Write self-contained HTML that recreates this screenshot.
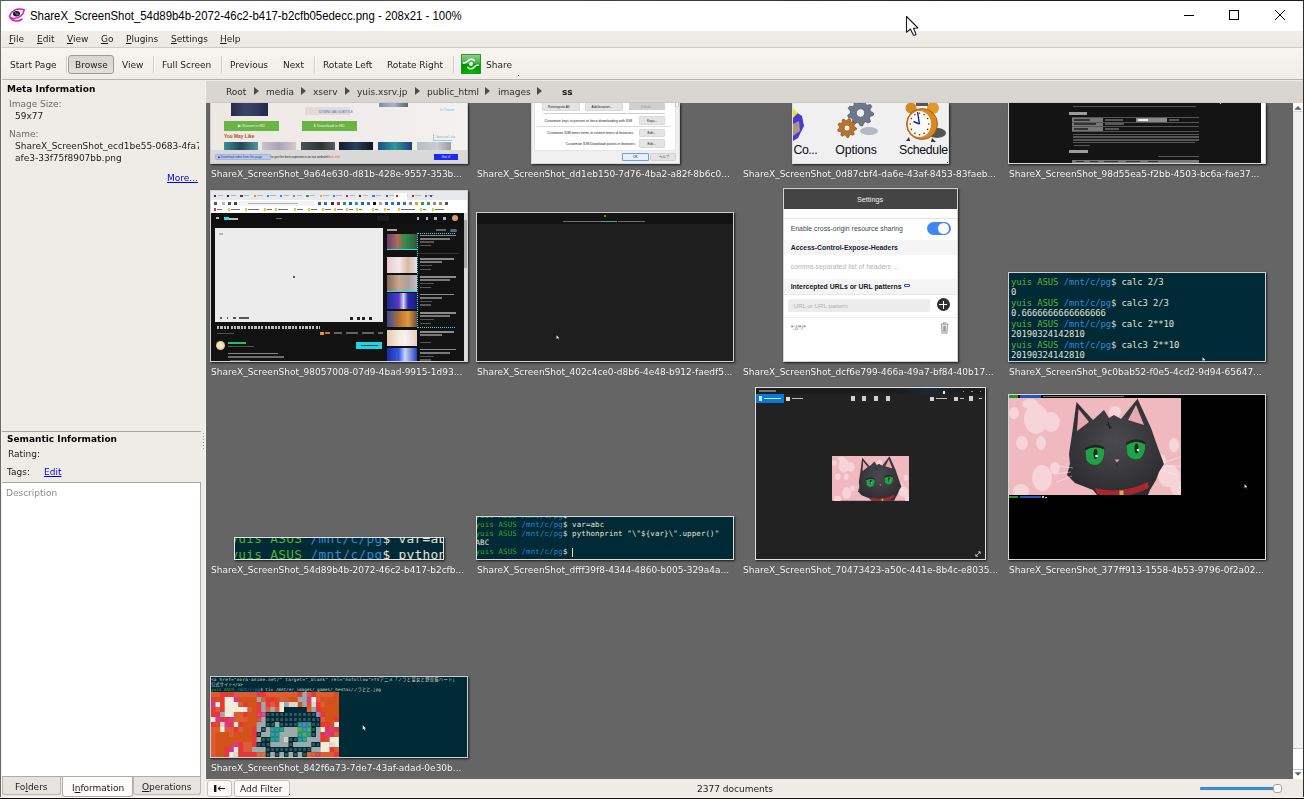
<!DOCTYPE html>
<html><head><meta charset="utf-8">
<title>Gwenview</title>
<style>
html,body{margin:0;padding:0;}
body>*{will-change:opacity;}
body{width:1304px;height:799px;position:relative;overflow:hidden;background:#efebe7;font-family:"DejaVu Sans","Liberation Sans",sans-serif;font-size:9px;color:#1c1c1c;}
.abs,.t,.th,.lbl,.sep,.tri{position:absolute;}
.t{white-space:nowrap;line-height:11px;height:11px;}
u{text-decoration:underline;text-decoration-thickness:1px;text-underline-offset:1px;}
#title{left:0;top:0;width:1304px;height:31px;background:#fff;}
#title .tt{left:30px;top:9px;font-family:"Liberation Sans",sans-serif;font-size:12.5px;line-height:15px;height:15px;color:#000;transform:scaleX(.912);transform-origin:0 0;}
#menubar{left:1px;top:31px;width:1302px;height:16px;background:linear-gradient(#f1eeea,#ece8e4);border-bottom:1px solid #d0ccc7;}
#toolbar{left:1px;top:48px;width:1302px;height:31px;background:linear-gradient(#f8f5f1,#f0ece8);border-bottom:1px solid #b7b3af;}
.sep{top:56px;width:1px;height:17px;background:#d0cdc9;box-shadow:1px 0 0 #fbfaf9;}
#left{left:1px;top:80px;width:204px;height:718px;background:#efebe7;}
#crumb{left:206px;top:81px;width:1097px;height:22px;background:#d9d6d2;}
#crumb .t{color:#2a2a2a;}
.tri{width:0;height:0;border-left:5.8px solid #4c4c4c;border-top:4.8px solid transparent;border-bottom:4.8px solid transparent;top:86.7px;}
#view{left:206px;top:103px;width:1087px;height:676px;background:#656565;overflow:hidden;}
#status{left:206px;top:779px;width:1097px;height:19px;background:#efebe7;}
.lbl{text-shadow:0 0 1px rgba(0,0,0,.55);color:#fff;font-size:9px;line-height:11px;white-space:nowrap;}
.th{overflow:hidden;box-sizing:border-box;border:1px solid #c9c9c9;}
.sh{position:absolute;box-shadow:1px 1px 2px rgba(0,0,0,.75);}
.g{color:#6e6b68;}
a.l{color:#0000ee;text-decoration:underline;text-underline-offset:1px;}
</style></head><body>
<!-- title bar -->
<div id="title" class="abs"><div class="t tt">ShareX_ScreenShot_54d89b4b-2072-46c2-b417-b2cfb05edecc.png - 208x21 - 100%</div>
<svg class="abs" style="left:8px;top:7px" width="18" height="16" viewBox="0 0 18 16"><path d="M1.5 9.5 C3 3.6 9 .7 16.2 2.8 C15.6 8 11 12 5 11.5 C3.5 11.3 2 10.6 1.5 9.5Z" fill="#f1ecfa" stroke="#d61fb0" stroke-width="1.5"/><path d="M2.2 11 C5 14.8 10 14.6 14 12.2" fill="none" stroke="#d61fb0" stroke-width="1.6" stroke-linecap="round"/><ellipse cx="8.5" cy="6.7" rx="3.5" ry="2.7" fill="#161616"/><circle cx="9.2" cy="7.3" r="1.3" fill="#2e8a2e"/><circle cx="7.6" cy="5.9" r=".8" fill="#5a6fd8"/></svg>
<svg class="abs" style="left:1180px;top:6px" width="110" height="18" viewBox="0 0 110 18"><path d="M4 9.5h10" stroke="#000" stroke-width="1"/><rect x="49.5" y="4.5" width="9" height="9" fill="none" stroke="#000" stroke-width="1"/><path d="M95 4l10 10M105 4l-10 10" stroke="#000" stroke-width="1"/></svg>
</div>
<!-- menubar -->
<div id="menubar" class="abs"></div>
<div class="t" style="left:9px;top:34px"><u>F</u>ile</div>
<div class="t" style="left:37px;top:34px"><u>E</u>dit</div>
<div class="t" style="left:67px;top:34px"><u>V</u>iew</div>
<div class="t" style="left:101px;top:34px"><u>G</u>o</div>
<div class="t" style="left:126px;top:34px"><u>P</u>lugins</div>
<div class="t" style="left:171px;top:34px"><u>S</u>ettings</div>
<div class="t" style="left:220px;top:34px"><u>H</u>elp</div>
<!-- toolbar -->
<div id="toolbar" class="abs"></div>
<div class="abs" style="left:68px;top:55px;width:46px;height:19px;box-sizing:border-box;border:1px solid #9e9b97;border-radius:3px;background:linear-gradient(#d9d6d2,#e2dfdb)"></div>
<div class="t" style="left:10px;top:60px">Start Page</div>
<div class="t" style="left:75px;top:60px">Browse</div>
<div class="t" style="left:122px;top:60px">View</div>
<div class="t" style="left:162px;top:60px">Full Screen</div>
<div class="t" style="left:230px;top:60px">Previous</div>
<div class="t" style="left:283px;top:60px">Next</div>
<div class="t" style="left:323px;top:60px">Rotate Left</div>
<div class="t" style="left:387px;top:60px">Rotate Right</div>
<div class="t" style="left:486px;top:60px">Share</div>
<div class="sep" style="left:66px"></div><div class="sep" style="left:153px"></div><div class="sep" style="left:221px"></div><div class="sep" style="left:314px"></div><div class="sep" style="left:453px"></div>
<svg class="abs" style="left:461px;top:54px" width="20" height="20" viewBox="0 0 20 20"><defs><linearGradient id="sg1" x1="0" y1="0" x2="0" y2="1"><stop offset="0" stop-color="#8fcf8f"/><stop offset="1" stop-color="#48ac48"/></linearGradient><radialGradient id="sg2" cx=".5" cy="1" r=".75"><stop offset="0" stop-color="#04bb04"/><stop offset="1" stop-color="#008c00"/></radialGradient></defs><rect x="0" y="0" width="20" height="20" rx="1.2" fill="url(#sg2)"/><path d="M.6 .6h18.8v9.2h-18.8z" fill="url(#sg1)"/><rect x=".4" y=".4" width="19.2" height="19.2" rx="1" fill="none" stroke="#1f9a1f" stroke-width=".8"/><circle cx="10" cy="10" r="1.95" fill="#fff"/><path d="M2.5 9 C5 9 5.5 8.5 6.5 7.3 C7.8 5.6 9.5 5 11 5.3 C12 5.5 12.8 6 13.3 6.7" fill="none" stroke="#fff" stroke-width="1.4" stroke-linecap="round"/><path d="M17.5 11 C15 11 14.5 11.5 13.5 12.7 C12.2 14.4 10.5 15 9 14.7 C8 14.5 7.2 14 6.7 13.3" fill="none" stroke="#fff" stroke-width="1.4" stroke-linecap="round"/></svg>
<div class="abs" style="left:518px;top:75px;width:1px;height:1px;background:#333"></div>
<!-- left panel -->
<div id="left" class="abs"></div>
<div class="t" style="left:7px;top:84px;font-weight:bold;color:#000">Meta Information</div>
<div class="t g" style="left:9px;top:99px">Image Size:</div>
<div class="t" style="left:15px;top:111px">59x77</div>
<div class="t g" style="left:9px;top:129px">Name:</div>
<div class="t" style="left:15px;top:141px;width:184px;overflow:hidden">ShareX_ScreenShot_ecd1be55-0683-4fa7-</div>
<div class="t" style="left:15px;top:153px">afe3-33f75f8907bb.png</div>
<div class="t" style="left:167px;top:173px"><a class="l">More...</a></div>
<div class="abs" style="left:1px;top:431px;width:200px;height:1px;background:#a6a39f"></div>
<div class="abs" style="left:203px;top:433px;width:1px;height:17px;background:repeating-linear-gradient(#9a9794 0 1px,transparent 1px 3px)"></div>
<div class="t" style="left:7px;top:434px;font-weight:bold;color:#000">Semantic Information</div>
<div class="t" style="left:8px;top:449px">Rating:</div>
<div class="t" style="left:7px;top:467px">Tags:</div>
<div class="t" style="left:44px;top:467px"><a class="l">Edit</a></div>
<div class="abs" style="left:1px;top:482px;width:200px;height:295px;box-sizing:border-box;border:1px solid #aeaba7;background:#fff"></div>
<div class="t" style="left:6px;top:488px;color:#8f8f8f">Description</div>
<!-- tabs -->
<div class="abs" style="left:2px;top:777px;width:59px;height:18px;box-sizing:border-box;border:1px solid #bab6b2;border-top:none;border-radius:0 0 3px 3px;background:#e7e3df"></div>
<div class="abs" style="left:133px;top:777px;width:68px;height:18px;box-sizing:border-box;border:1px solid #bab6b2;border-top:none;border-radius:0 0 3px 3px;background:#e7e3df"></div>
<div class="abs" style="left:62px;top:777px;width:71px;height:20px;box-sizing:border-box;border:1px solid #b0ada9;border-top:none;border-radius:0 0 3px 3px;background:#fcfbfa"></div>
<div class="t" style="left:15px;top:782px">Fo<u>l</u>ders</div>
<div class="t" style="left:72px;top:783px">I<u>n</u>formation</div>
<div class="t" style="left:142px;top:782px"><u>O</u>perations</div>
<div class="abs" style="left:205px;top:80px;width:1px;height:718px;background:#f7f5f3"></div>
<div id="crumb" class="abs"></div>
<div class="t" style="left:226px;top:87px;color:#2b2b2b">Root</div><div class="tri" style="left:254px"></div>
<div class="t" style="left:266px;top:87px;color:#2b2b2b">media</div><div class="tri" style="left:301px"></div>
<div class="t" style="left:313px;top:87px;color:#2b2b2b">xserv</div><div class="tri" style="left:345px"></div>
<div class="t" style="left:357px;top:87px;color:#2b2b2b">yuis.xsrv.jp</div><div class="tri" style="left:415px"></div>
<div class="t" style="left:427px;top:87px;color:#2b2b2b">public_html</div><div class="tri" style="left:485px"></div>
<div class="t" style="left:498px;top:87px;color:#2b2b2b">images</div><div class="tri" style="left:537px"></div>
<div class="t" style="left:562px;top:87px;color:#1a1a1a;font-weight:bold">ss</div>
<div id="view" class="abs"></div>
<div class="sh" style="left:210px;top:103px;width:258px;height:61px;"></div><div class="th" style="left:210px;top:103px;width:258px;height:61px;background:linear-gradient(90deg,#eee8e4,#f1eceb 60%,#f4f1f1);border-color:#c9c9c9;border-top:none;"><div class="abs" style="left:20px;top:0px;width:37px;height:12.5px;background:linear-gradient(90deg,#262c4a,#3a4468 40%,#303a5c 70%,#222844)"></div><div class="abs" style="left:94px;top:4px;width:45px;height:8px;background:#e3dbd5"></div><div class="abs" style="left:108px;top:6.6px;white-space:nowrap;font-family:'Liberation Sans',sans-serif;font-size:3.1px;line-height:4px;color:#4868d0">DOWNLOAD SUBTITLE</div><div class="abs" style="left:168px;top:0px;width:29px;height:4px;background:linear-gradient(90deg,#7f8ea6,#aab4c4 50%,#5e6470)"></div><div class="abs" style="left:229px;top:5px;white-space:nowrap;font-family:'Liberation Sans',sans-serif;font-size:3.2px;line-height:4px;color:#58c8d8">In Theater</div><div class="abs" style="left:13px;top:18px;width:55px;height:9.5px;background:#6ab345"></div><div class="abs" style="left:90.5px;top:18px;width:55.5px;height:9.5px;background:#6ab345"></div><div class="abs" style="left:27px;top:20.6px;white-space:nowrap;font-family:'Liberation Sans',sans-serif;font-size:3.8px;line-height:5px;color:#eaf6e2">▶ Stream in HD</div><div class="abs" style="left:102px;top:20.6px;white-space:nowrap;font-family:'Liberation Sans',sans-serif;font-size:3.8px;line-height:5px;color:#eaf6e2">⬇ Download in HD</div><div class="abs" style="left:13px;top:31px;white-space:nowrap;font-family:'Liberation Sans',sans-serif;font-size:4.8px;line-height:6px;color:#c24a0c;font-weight:bold">You May Like</div><div class="abs" style="left:13px;top:38.5px;width:34px;height:8.8px;background:linear-gradient(90deg,#3b8f95,#24455a 50%,#4a9a9c)"></div><div class="abs" style="left:51.3px;top:38.5px;width:34px;height:8.8px;background:linear-gradient(90deg,#c9c2cc,#a9a4b4 50%,#d8c8d0)"></div><div class="abs" style="left:90px;top:38.5px;width:34px;height:8.8px;background:linear-gradient(90deg,#4a5456,#2c3436 60%,#58605c)"></div><div class="abs" style="left:128.3px;top:38.5px;width:34px;height:8.8px;background:linear-gradient(90deg,#101c2e,#2a405c 50%,#0c1420)"></div><div class="abs" style="left:167px;top:38.5px;width:34px;height:8.8px;background:linear-gradient(90deg,#1c4f86,#2f9a9a 50%,#1a3c78)"></div><div class="abs" style="left:205.8px;top:38.5px;width:34px;height:8.8px;background:linear-gradient(90deg,#b9bdc4,#c9cbd0 60%,#9a9ca4)"></div><div class="abs" style="left:222px;top:31px;width:1px;height:7px;background:#7fd6e0"></div><div class="abs" style="left:222px;top:37px;width:19px;height:1px;background:#7fd6e0"></div><div class="abs" style="left:225px;top:33px;white-space:nowrap;font-family:'Liberation Sans',sans-serif;font-size:2.6px;line-height:3px;color:#9aa">Sponsored Links</div><div class="abs" style="left:0px;top:47.3px;width:256px;height:12.7px;background:#d9d9d9"></div><div class="abs" style="left:4.5px;top:52px;width:54.5px;height:4.2px;background:#b9c6ee;box-shadow:0 0 0 .5px #7d8cc8"></div><div class="abs" style="left:7px;top:52.4px;white-space:nowrap;font-family:'Liberation Sans',sans-serif;font-size:3px;line-height:4px;color:#2238b0">▶ Download video from this page</div><div class="abs" style="left:60px;top:52.3px;white-space:nowrap;font-family:'Liberation Sans',sans-serif;font-size:3.1px;line-height:4px;color:#222">to get the best experience on our website</div><div class="abs" style="left:116px;top:52.3px;white-space:nowrap;font-family:'Liberation Sans',sans-serif;font-size:3.1px;line-height:4px;color:#e06010">More info</div><div class="abs" style="left:223px;top:50.5px;width:23.5px;height:6.5px;background:#1b2bf2"></div><div class="abs" style="left:230.5px;top:51.8px;white-space:nowrap;font-family:'Liberation Sans',sans-serif;font-size:3.4px;line-height:4px;color:#dfe4ff">Got it!</div></div>
<div class="lbl" style="left:211px;top:169px">ShareX_ScreenShot_9a64e630-d81b-428e-9557-353b...</div>
<div class="sh" style="left:531px;top:103px;width:149px;height:61px;"></div><div class="th" style="left:531px;top:103px;width:149px;height:61px;background:#f0f0f0;border-color:#d6d6d6;border-top:none;"><div class="abs" style="left:3px;top:0px;width:140px;height:47px;background:#fff;box-shadow:0 0 0 .5px #dcdcdc"></div><div class="abs" style="left:10.5px;top:0px;width:36px;height:6.5px;background:#e4e4e4;box-shadow:0 0 0 .5px #b4b4b4;"></div><div class="abs" style="left:53.5px;top:0px;width:36px;height:6.5px;background:#e4e4e4;box-shadow:0 0 0 .5px #b4b4b4;"></div><div class="abs" style="left:97px;top:0px;width:35.5px;height:6.5px;background:#cfcfcf;"></div><div class="abs" style="left:16px;top:1.6px;white-space:nowrap;font-family:'Liberation Sans',sans-serif;font-size:3.3px;line-height:4px;color:#222;">Reintegrate All</div><div class="abs" style="left:59.5px;top:1.6px;white-space:nowrap;font-family:'Liberation Sans',sans-serif;font-size:3.3px;line-height:4px;color:#222;">Add browser...</div><div class="abs" style="left:109px;top:1.6px;white-space:nowrap;font-family:'Liberation Sans',sans-serif;font-size:3.3px;line-height:4px;color:#222;color:#999;">Details</div><div class="abs" style="left:11px;top:10.3px;width:121.5px;height:0.5px;background:#d0d0d0"></div><div class="abs" style="left:12.5px;top:15.6px;white-space:nowrap;font-family:'Liberation Sans',sans-serif;font-size:3.3px;line-height:4px;color:#222;font-size:3.45px;">Customize keys to prevent or force downloading with IDM</div><div class="abs" style="left:107.8px;top:14px;width:24.7px;height:6.8px;background:#e4e4e4;box-shadow:0 0 0 .5px #b4b4b4;"></div><div class="abs" style="left:115px;top:15.6px;white-space:nowrap;font-family:'Liberation Sans',sans-serif;font-size:3.3px;line-height:4px;color:#222;">Keys...</div><div class="abs" style="left:5px;top:23px;width:133px;height:0.5px;background:#dadada"></div><div class="abs" style="left:15px;top:28px;white-space:nowrap;font-family:'Liberation Sans',sans-serif;font-size:3.3px;line-height:4px;color:#222;font-size:3.45px;">Customize IDM menu items in context menu of browsers</div><div class="abs" style="left:107.8px;top:26.6px;width:24.7px;height:6.9px;background:#e4e4e4;box-shadow:0 0 0 .5px #b4b4b4;"></div><div class="abs" style="left:115.5px;top:28.2px;white-space:nowrap;font-family:'Liberation Sans',sans-serif;font-size:3.3px;line-height:4px;color:#222;">Edit...</div><div class="abs" style="left:33.8px;top:38.5px;white-space:nowrap;font-family:'Liberation Sans',sans-serif;font-size:3.3px;line-height:4px;color:#222;font-size:3.45px;">Customize IDM Download panels in browsers</div><div class="abs" style="left:107.8px;top:37.3px;width:24.7px;height:6.7px;background:#e4e4e4;box-shadow:0 0 0 .5px #b4b4b4;"></div><div class="abs" style="left:115.5px;top:38.8px;white-space:nowrap;font-family:'Liberation Sans',sans-serif;font-size:3.3px;line-height:4px;color:#222;">Edit...</div><div class="abs" style="left:91.3px;top:50.6px;width:24.5px;height:6.7px;background:#e6eef8;box-shadow:0 0 0 .7px #2f7fd8"></div><div class="abs" style="left:119.3px;top:50.6px;width:24px;height:6.7px;background:#e4e4e4;box-shadow:0 0 0 .5px #b4b4b4;"></div><div class="abs" style="left:101px;top:52px;white-space:nowrap;font-family:'Liberation Sans',sans-serif;font-size:3.3px;line-height:4px;color:#222;">OK</div><div class="abs" style="left:127px;top:52px;white-space:nowrap;font-family:'Liberation Sans','Noto Sans CJK JP',sans-serif;font-size:3.3px;line-height:4px;color:#222;">ヘルプ</div><div class="abs" style="left:143.5px;top:0px;width:2.5px;height:3px;background:#fff;box-shadow:0 0 0 .4px #999"></div></div>
<div class="lbl" style="left:477px;top:169px">ShareX_ScreenShot_dd1eb150-7d76-4ba2-a82f-8b6c0...</div>
<div class="sh" style="left:792px;top:103px;width:157px;height:61px;"></div><div class="th" style="left:792px;top:103px;width:157px;height:61px;background:#f0f0f0;border-color:#e0e0e0;border-top:none;"><div class="abs" style="left:0.5px;top:39.5px;white-space:nowrap;font-family:'Liberation Sans',sans-serif;font-size:12.3px;line-height:14px;color:#0a0a14;letter-spacing:-.45px">Co...</div><div class="abs" style="left:42.3px;top:39.5px;white-space:nowrap;font-family:'Liberation Sans',sans-serif;font-size:12.3px;line-height:14px;color:#0a0a14;letter-spacing:-.15px">Options</div><div class="abs" style="left:106px;top:39.5px;white-space:nowrap;font-family:'Liberation Sans',sans-serif;font-size:12.3px;line-height:14px;color:#0a0a14;letter-spacing:-.3px">Schedule</div><svg class="abs" style="left:0;top:0" width="157" height="61" viewBox="792 103 157 61"><ellipse cx="868" cy="131" rx="9" ry="4" fill="#9aa0b0" opacity=".7"/><polygon points="872.5,113.0 872.3,115.3 869.0,116.5 868.3,118.1 869.5,121.4 867.9,123.0 864.6,121.8 863.0,122.5 861.8,125.8 859.5,126.0 857.7,123.0 856.0,122.5 853.0,124.3 851.1,123.0 851.7,119.5 850.7,118.1 847.3,117.4 846.7,115.3 849.4,113.0 849.5,111.2 847.3,108.6 848.2,106.5 851.7,106.5 853.0,105.2 853.0,101.7 855.1,100.8 857.7,103.0 859.5,102.9 861.8,100.2 863.9,100.8 864.6,104.2 866.0,105.2 869.5,104.6 870.8,106.5 869.0,109.5 869.5,111.2" fill="#6e788c" stroke="#3c4252" stroke-width=".6"/><circle cx="859.5" cy="113" r="4.2" fill="#f0f0f0" stroke="#3c4252" stroke-width=".6"/><polygon points="855.5,128.0 855.4,129.6 853.0,130.5 852.4,131.7 853.3,134.1 852.1,135.3 849.7,134.4 848.5,135.0 847.6,137.4 846.0,137.5 844.7,135.3 843.5,135.0 841.2,136.2 839.9,135.3 840.3,132.8 839.6,131.7 837.1,131.2 836.6,129.6 838.6,128.0 838.7,126.7 837.1,124.8 837.8,123.2 840.3,123.2 841.2,122.3 841.2,119.8 842.8,119.1 844.7,120.7 846.0,120.6 847.6,118.6 849.2,119.1 849.7,121.6 850.8,122.3 853.3,121.9 854.2,123.2 853.0,125.5 853.3,126.7" fill="#b8742c" stroke="#7a4410" stroke-width=".6"/><circle cx="846" cy="128" r="3.0" fill="#f0f0f0" stroke="#7a4410" stroke-width=".6"/><path d="M792 110 L801 116 L803 126 L797 138 L792 141Z" fill="#4a3ad0"/><path d="M792 108 L797 113 L792 118Z" fill="#e8e030"/><path d="M792 124 L798 121 L799 131 L792 136Z" fill="#a89888"/><ellipse cx="936" cy="133" rx="9" ry="5" fill="#222" opacity=".75"/><circle cx="910" cy="108" r="5.5" fill="#d48a24"/><circle cx="932" cy="108" r="6" fill="#e09a2c"/><path d="M915 103h12v3h-12z" fill="#555"/><circle cx="921" cy="124" r="15.5" fill="#d88a22"/><circle cx="921" cy="124" r="15.5" fill="none" stroke="#8a5210" stroke-width=".8"/><ellipse cx="918.5" cy="124" rx="11.5" ry="13" fill="#fbfbf6"/><circle cx="927.8" cy="124.0" r=".8" fill="#a01818"/><circle cx="926.6" cy="129.4" r=".8" fill="#a01818"/><circle cx="923.1" cy="133.4" r=".8" fill="#a01818"/><circle cx="918.5" cy="134.8" r=".8" fill="#a01818"/><circle cx="913.9" cy="133.4" r=".8" fill="#a01818"/><circle cx="910.4" cy="129.4" r=".8" fill="#a01818"/><circle cx="909.2" cy="124.0" r=".8" fill="#a01818"/><circle cx="910.4" cy="118.6" r=".8" fill="#a01818"/><circle cx="913.9" cy="114.6" r=".8" fill="#a01818"/><circle cx="918.5" cy="113.2" r=".8" fill="#a01818"/><circle cx="923.1" cy="114.6" r=".8" fill="#a01818"/><circle cx="926.6" cy="118.6" r=".8" fill="#a01818"/><path d="M918.5 124 L916.5 112" stroke="#1a2a9a" stroke-width="1.4"/><path d="M918.5 124 L912.5 121.5" stroke="#1a2a9a" stroke-width="1.6"/><path d="M908 137l-3 4h4z M931 138l4 4h-5z" fill="#333"/></svg><div class="abs" style="left:154px;top:58.5px;width:1px;height:1px;background:#333"></div></div>
<div class="lbl" style="left:743px;top:169px">ShareX_ScreenShot_0d87cbf4-da6e-43af-8453-83faeb...</div>
<div class="sh" style="left:1008px;top:103px;width:258px;height:61px;"></div><div class="th" style="left:1008px;top:103px;width:258px;height:61px;background:#141414;border-color:#d8d8d8;border-top:none;"><div class="abs" style="left:252px;top:0px;width:4px;height:60px;background:#fdfdfd"></div><div class="abs" style="left:64px;top:2.5px;width:123px;height:1.5px;background:#8e8e8e;opacity:.55;"></div><div class="abs" style="left:60px;top:9px;width:18px;height:2.5px;background:#9c9c9c"></div><div class="abs" style="left:63px;top:14.3px;width:31px;height:13.7px;background:#777"></div><div class="abs" style="left:63px;top:18.6px;width:127px;height:0.4px;background:#555"></div><div class="abs" style="left:63px;top:23.3px;width:127px;height:0.4px;background:#555"></div><div class="abs" style="left:63px;top:28px;width:127px;height:0.4px;background:#555"></div><div class="abs" style="left:63px;top:14.1px;width:127px;height:0.4px;background:#555"></div><div class="abs" style="left:127px;top:14.5px;width:31px;height:4.1px;background:#8a8a8a"></div><div class="abs" style="left:65px;top:15.5px;width:16px;height:2px;background:#222;opacity:.8"></div><div class="abs" style="left:65px;top:20px;width:22px;height:2px;background:#222;opacity:.8"></div><div class="abs" style="left:65px;top:24.7px;width:14px;height:2px;background:#222;opacity:.8"></div><div class="abs" style="left:96px;top:15.5px;width:18px;height:2px;background:#8e8e8e;opacity:.55;"></div><div class="abs" style="left:129px;top:15.5px;width:10px;height:2px;background:#eee"></div><div class="abs" style="left:160px;top:15.5px;width:10px;height:2px;background:#8e8e8e;opacity:.55;"></div><div class="abs" style="left:96px;top:20px;width:19px;height:2px;background:#8e8e8e;opacity:.55;"></div><div class="abs" style="left:96px;top:24.7px;width:14px;height:2px;background:#8e8e8e;opacity:.55;"></div><div class="abs" style="left:64px;top:30.5px;width:126px;height:1.5px;background:#8e8e8e;opacity:.55;"></div><div class="abs" style="left:64px;top:33.3px;width:126px;height:1.5px;background:#8e8e8e;opacity:.55;"></div><div class="abs" style="left:64px;top:36.1px;width:126px;height:1.5px;background:#8e8e8e;opacity:.55;"></div><div class="abs" style="left:64px;top:38.9px;width:122px;height:1.5px;background:#8e8e8e;opacity:.55;"></div><div class="abs" style="left:65px;top:41.6px;width:16px;height:1.4px;background:#8e8e8e;opacity:.55;"></div><div class="abs" style="left:60px;top:47px;width:19px;height:2.5px;background:#9c9c9c"></div><div class="abs" style="left:149px;top:52.5px;width:41px;height:1.5px;background:#8e8e8e;opacity:.55;"></div><div class="abs" style="left:63px;top:56.5px;width:127px;height:3.5px;background:#7a7a7a"></div><div class="abs" style="left:67px;top:57.5px;width:8px;height:1.5px;background:#333"></div><div class="abs" style="left:81px;top:57.5px;width:8px;height:1.5px;background:#333"></div><div class="abs" style="left:95px;top:57.5px;width:14px;height:1.5px;background:#333"></div><div class="abs" style="left:117px;top:57.5px;width:14px;height:1.5px;background:#333"></div><div class="abs" style="left:139px;top:57.5px;width:10px;height:1.5px;background:#333"></div><div class="abs" style="left:211px;top:0px;width:1px;height:1px;background:#eee"></div></div>
<div class="lbl" style="left:1009px;top:169px">ShareX_ScreenShot_98d55ea5-f2bb-4503-bc6a-fae37...</div>
<div class="sh" style="left:210px;top:190px;width:258px;height:172px;"></div><div class="th" style="left:210px;top:190px;width:258px;height:172px;background:#121212;border-color:#d4d4d4;"><div class="abs" style="left:0px;top:0px;width:256px;height:8.7px;background:#e7e9ec"></div><div class="abs" style="left:0px;top:8.7px;width:256px;height:13.3px;background:#fff"></div><div class="abs" style="left:3px;top:3.5px;width:2.2px;height:2.5px;background:#333"></div><div class="abs" style="left:6.5px;top:4.3px;width:5.5px;height:1px;background:#9aa0b0;opacity:.7"></div><div class="abs" style="left:16.2px;top:3.5px;width:2.2px;height:2.5px;background:#222"></div><div class="abs" style="left:19.7px;top:4.3px;width:5.5px;height:1px;background:#9aa0b0;opacity:.7"></div><div class="abs" style="left:29.4px;top:3.5px;width:2.2px;height:2.5px;background:#444"></div><div class="abs" style="left:32.9px;top:4.3px;width:5.5px;height:1px;background:#9aa0b0;opacity:.7"></div><div class="abs" style="left:42.6px;top:3.5px;width:2.2px;height:2.5px;background:#c9a227"></div><div class="abs" style="left:46.1px;top:4.3px;width:5.5px;height:1px;background:#9aa0b0;opacity:.7"></div><div class="abs" style="left:55.8px;top:3.5px;width:2.2px;height:2.5px;background:#3b7ded"></div><div class="abs" style="left:59.3px;top:4.3px;width:5.5px;height:1px;background:#9aa0b0;opacity:.7"></div><div class="abs" style="left:69px;top:3.5px;width:2.2px;height:2.5px;background:#3b7ded"></div><div class="abs" style="left:72.5px;top:4.3px;width:5.5px;height:1px;background:#9aa0b0;opacity:.7"></div><div class="abs" style="left:82.2px;top:3.5px;width:2.2px;height:2.5px;background:#888"></div><div class="abs" style="left:85.7px;top:4.3px;width:5.5px;height:1px;background:#9aa0b0;opacity:.7"></div><div class="abs" style="left:95.4px;top:3.5px;width:2.2px;height:2.5px;background:#2a9d5c"></div><div class="abs" style="left:98.9px;top:4.3px;width:5.5px;height:1px;background:#9aa0b0;opacity:.7"></div><div class="abs" style="left:108.6px;top:3.5px;width:2.2px;height:2.5px;background:#e8b020"></div><div class="abs" style="left:112.1px;top:4.3px;width:5.5px;height:1px;background:#9aa0b0;opacity:.7"></div><div class="abs" style="left:121.8px;top:3.5px;width:2.2px;height:2.5px;background:#3b7ded"></div><div class="abs" style="left:125.3px;top:4.3px;width:5.5px;height:1px;background:#9aa0b0;opacity:.7"></div><div class="abs" style="left:135px;top:3.5px;width:2.2px;height:2.5px;background:#c03030"></div><div class="abs" style="left:138.5px;top:4.3px;width:5.5px;height:1px;background:#9aa0b0;opacity:.7"></div><div class="abs" style="left:148.2px;top:3.5px;width:2.2px;height:2.5px;background:#333"></div><div class="abs" style="left:151.7px;top:4.3px;width:5.5px;height:1px;background:#9aa0b0;opacity:.7"></div><div class="abs" style="left:161.4px;top:3.5px;width:2.2px;height:2.5px;background:#3b7ded"></div><div class="abs" style="left:164.9px;top:4.3px;width:5.5px;height:1px;background:#9aa0b0;opacity:.7"></div><div class="abs" style="left:174.6px;top:3.5px;width:2.2px;height:2.5px;background:#555"></div><div class="abs" style="left:178.1px;top:4.3px;width:5.5px;height:1px;background:#9aa0b0;opacity:.7"></div><div class="abs" style="left:187.8px;top:3.5px;width:2.2px;height:2.5px;background:#d02020"></div><div class="abs" style="left:191.3px;top:4.3px;width:5.5px;height:1px;background:#9aa0b0;opacity:.7"></div><div class="abs" style="left:200.8px;top:3.5px;width:2.2px;height:2.5px;background:#d02020"></div><div class="abs" style="left:204.3px;top:4.3px;width:5.5px;height:1px;background:#9aa0b0;opacity:.7"></div><div class="abs" style="left:213.8px;top:3.5px;width:2.2px;height:2.5px;background:#3b7ded"></div><div class="abs" style="left:217.3px;top:4.3px;width:5.5px;height:1px;background:#9aa0b0;opacity:.7"></div><div class="abs" style="left:183px;top:1.5px;width:13px;height:7.2px;background:#fff"></div><div class="abs" style="left:185px;top:3.5px;width:2.2px;height:2.5px;background:#d02020"></div><div class="abs" style="left:219px;top:4px;width:2px;height:1.5px;background:#555"></div><div class="abs" style="left:28px;top:9.8px;width:76px;height:4.8px;background:#f1f3f4;border-radius:2.4px"></div><div class="abs" style="left:37px;top:11.6px;width:50px;height:1.2px;background:#777;opacity:.55"></div><div class="abs" style="left:3px;top:11px;width:2.6px;height:2.5px;background:#555"></div><div class="abs" style="left:11px;top:11px;width:2.6px;height:2.5px;background:#bbb"></div><div class="abs" style="left:17px;top:11px;width:2.6px;height:2.5px;background:#555"></div><div class="abs" style="left:23px;top:11px;width:2.6px;height:2.5px;background:#444"></div><div class="abs" style="left:107px;top:11px;width:2.6px;height:2.5px;background:#2a56c6"></div><div class="abs" style="left:113px;top:11px;width:2.6px;height:2.5px;background:#2a6fd6"></div><div class="abs" style="left:120px;top:11px;width:2.6px;height:2.5px;background:#333"></div><div class="abs" style="left:126px;top:11px;width:2.6px;height:2.5px;background:#c0392b"></div><div class="abs" style="left:132px;top:11px;width:2.6px;height:2.5px;background:#1aa260"></div><div class="abs" style="left:138px;top:11px;width:2.6px;height:2.5px;background:#2a56c6"></div><div class="abs" style="left:144px;top:11px;width:2.6px;height:2.5px;background:#16a8c8"></div><div class="abs" style="left:150px;top:11px;width:2.6px;height:2.5px;background:#2a56c6"></div><div class="abs" style="left:156px;top:11px;width:2.6px;height:2.5px;background:#3a6ad0"></div><div class="abs" style="left:162px;top:11px;width:2.6px;height:2.5px;background:#111"></div><div class="abs" style="left:168px;top:11px;width:2.6px;height:2.5px;background:#aaa"></div><div class="abs" style="left:174px;top:11px;width:2.6px;height:2.5px;background:#2a56c6"></div><div class="abs" style="left:180px;top:11px;width:2.6px;height:2.5px;background:#2a6fd6"></div><div class="abs" style="left:186px;top:11px;width:2.6px;height:2.5px;background:#2a56c6"></div><div class="abs" style="left:192px;top:11px;width:2.6px;height:2.5px;background:#3a6ad0"></div><div class="abs" style="left:198px;top:11px;width:2.6px;height:2.5px;background:#888"></div><div class="abs" style="left:204px;top:11px;width:2.6px;height:2.5px;background:#e8a020"></div><div class="abs" style="left:210px;top:11px;width:2.6px;height:2.5px;background:#2a9d5c"></div><div class="abs" style="left:216px;top:11px;width:2.6px;height:2.5px;background:#2a9d5c"></div><div class="abs" style="left:222px;top:11px;width:2.6px;height:2.5px;background:#888"></div><div class="abs" style="left:228px;top:11px;width:2.6px;height:2.5px;background:#c08040"></div><div class="abs" style="left:234px;top:11px;width:2.6px;height:2.5px;background:#555"></div><div class="abs" style="left:3px;top:17px;width:2px;height:3px;background:#d03a2a"></div><div class="abs" style="left:6.2px;top:17.8px;width:5px;height:1.6px;background:#333;opacity:.7"></div><div class="abs" style="left:17px;top:17px;width:2px;height:3px;background:#f2c230"></div><div class="abs" style="left:20.2px;top:17.8px;width:9px;height:1.6px;background:#333;opacity:.7"></div><div class="abs" style="left:34px;top:17px;width:2px;height:3px;background:#f2c230"></div><div class="abs" style="left:37.2px;top:17.8px;width:11px;height:1.6px;background:#333;opacity:.7"></div><div class="abs" style="left:53px;top:17px;width:2px;height:3px;background:#f2c230"></div><div class="abs" style="left:56.2px;top:17.8px;width:5px;height:1.6px;background:#333;opacity:.7"></div><div class="abs" style="left:64px;top:17px;width:2px;height:3px;background:#f2c230"></div><div class="abs" style="left:67.2px;top:17.8px;width:10px;height:1.6px;background:#333;opacity:.7"></div><div class="abs" style="left:83px;top:17px;width:2px;height:3px;background:#f2c230"></div><div class="abs" style="left:86.2px;top:17.8px;width:6px;height:1.6px;background:#333;opacity:.7"></div><div class="abs" style="left:97px;top:17px;width:2px;height:3px;background:#f2c230"></div><div class="abs" style="left:100.2px;top:17.8px;width:6px;height:1.6px;background:#333;opacity:.7"></div><div class="abs" style="left:111px;top:17px;width:2px;height:3px;background:#f2c230"></div><div class="abs" style="left:114.2px;top:17.8px;width:6px;height:1.6px;background:#333;opacity:.7"></div><div class="abs" style="left:123px;top:17px;width:2px;height:3px;background:#f2c230"></div><div class="abs" style="left:126.2px;top:17.8px;width:6px;height:1.6px;background:#333;opacity:.7"></div><div class="abs" style="left:135px;top:17px;width:2px;height:3px;background:#f2c230"></div><div class="abs" style="left:138.2px;top:17.8px;width:4px;height:1.6px;background:#333;opacity:.7"></div><div class="abs" style="left:145px;top:17px;width:2px;height:3px;background:#f2c230"></div><div class="abs" style="left:148.2px;top:17.8px;width:3px;height:1.6px;background:#333;opacity:.7"></div><div class="abs" style="left:161px;top:17px;width:2px;height:3px;background:#f2c230"></div><div class="abs" style="left:164.2px;top:17.8px;width:3px;height:1.6px;background:#333;opacity:.7"></div><div class="abs" style="left:173px;top:17px;width:2px;height:3px;background:#f2c230"></div><div class="abs" style="left:176.2px;top:17.8px;width:3px;height:1.6px;background:#333;opacity:.7"></div><div class="abs" style="left:187px;top:17px;width:2px;height:3px;background:#f2c230"></div><div class="abs" style="left:190.2px;top:17.8px;width:14px;height:1.6px;background:#333;opacity:.7"></div><div class="abs" style="left:209px;top:17px;width:2px;height:3px;background:#f2c230"></div><div class="abs" style="left:212.2px;top:17.8px;width:3px;height:1.6px;background:#333;opacity:.7"></div><div class="abs" style="left:221px;top:17px;width:2px;height:3px;background:#f2c230"></div><div class="abs" style="left:224.2px;top:17.8px;width:9px;height:1.6px;background:#333;opacity:.7"></div><div class="abs" style="left:0px;top:22px;width:256px;height:11px;background:#0f0f0f"></div><div class="abs" style="left:4.5px;top:26.3px;width:3px;height:2px;background:#bbb"></div><div class="abs" style="left:13px;top:26px;width:4.6px;height:2.8px;background:#19e6f0"></div><div class="abs" style="left:17.8px;top:26.6px;width:9.2px;height:2.2px;background:#ddd;opacity:.85"></div><div class="abs" style="left:65px;top:26.8px;width:6px;height:1.2px;background:#888;opacity:.7"></div><div class="abs" style="left:166px;top:24.5px;width:12px;height:5.5px;background:#1c1c1c"></div><div class="abs" style="left:205.5px;top:26px;width:2.6px;height:2.6px;background:#ccc;opacity:.85"></div><div class="abs" style="left:214.5px;top:26px;width:2.6px;height:2.6px;background:#ccc;opacity:.85"></div><div class="abs" style="left:223px;top:26px;width:2.6px;height:2.6px;background:#ccc;opacity:.85"></div><div class="abs" style="left:232px;top:26px;width:2.6px;height:2.6px;background:#ccc;opacity:.85"></div><div class="abs" style="left:240.5px;top:24.3px;width:6px;height:6px;background:#d9a066;border-radius:3px"></div><div class="abs" style="left:4.3px;top:37.3px;width:167.5px;height:93.4px;background:#ececec"></div><div class="abs" style="left:8px;top:42px;width:4px;height:1.6px;background:#bbb"></div><div class="abs" style="left:82px;top:84.5px;width:1.5px;height:2px;background:#555"></div><div class="abs" style="left:9px;top:126px;width:1.6px;height:2.4px;background:#333;opacity:.8"></div><div class="abs" style="left:16px;top:126px;width:1.2px;height:2.4px;background:#333;opacity:.8"></div><div class="abs" style="left:22px;top:126px;width:2.5px;height:2.4px;background:#333;opacity:.8"></div><div class="abs" style="left:28px;top:126px;width:10px;height:2.4px;background:#333;opacity:.8"></div><div class="abs" style="left:139px;top:125.8px;width:3px;height:2.8px;background:#222"></div><div class="abs" style="left:146px;top:125.8px;width:3px;height:2.8px;background:#222"></div><div class="abs" style="left:151px;top:125.8px;width:3px;height:2.8px;background:#222"></div><div class="abs" style="left:158px;top:125.8px;width:3px;height:2.8px;background:#222"></div><div class="abs" style="left:5.5px;top:134.5px;width:103.5px;height:3.1px;background:repeating-linear-gradient(90deg,#e8e8e8 0 2.2px,transparent 2.2px 3.4px);opacity:.8"></div><div class="abs" style="left:5.5px;top:141.5px;width:17.5px;height:1.5px;background:#777;opacity:.6"></div><div class="abs" style="left:109px;top:140.6px;width:3.6px;height:3px;background:#e8922a"></div><div class="abs" style="left:113.5px;top:141.3px;width:5.5px;height:1.7px;background:#e8922a;opacity:.8"></div><div class="abs" style="left:123px;top:141.3px;width:8px;height:1.7px;background:#999;opacity:.6"></div><div class="abs" style="left:135px;top:141.3px;width:12px;height:1.7px;background:#999;opacity:.6"></div><div class="abs" style="left:151px;top:141.3px;width:12px;height:1.7px;background:#999;opacity:.6"></div><div class="abs" style="left:167px;top:141.3px;width:5px;height:1.7px;background:#999;opacity:.6"></div><div class="abs" style="left:4.5px;top:149.5px;width:9px;height:9px;background:radial-gradient(#f4e6c4 40%,#c89a5a);border-radius:5px"></div><div class="abs" style="left:17px;top:151.2px;width:18px;height:1.8px;background:#2fd07a;opacity:.9"></div><div class="abs" style="left:17px;top:155px;width:26px;height:1.3px;background:#777;opacity:.7"></div><div class="abs" style="left:145px;top:150.7px;width:26.2px;height:7.6px;background:#1dd5e3"></div><div class="abs" style="left:150px;top:154px;width:17px;height:1.2px;background:#0a4a50"></div><div class="abs" style="left:17px;top:161.5px;width:50px;height:1.5px;background:#bbb;opacity:.7"></div><div class="abs" style="left:17px;top:165px;width:56px;height:1.5px;background:#aaa;opacity:.6"></div><div class="abs" style="left:19px;top:168.7px;width:20px;height:1.3px;background:#999;opacity:.5"></div><div class="abs" style="left:176px;top:38px;width:10px;height:2px;background:#ccc;opacity:.8"></div><div class="abs" style="left:225px;top:38px;width:10px;height:1.5px;background:#666"></div><div class="abs" style="left:239px;top:37.5px;width:7px;height:3.5px;background:#666;border-radius:2px"></div><div class="abs" style="left:176px;top:42.6px;width:30px;height:16.6px;background:linear-gradient(90deg,#6a3a6a,#b06a5a 35%,#3a8a4a 60%,#2a5a3a)"></div><div class="abs" style="left:208.5px;top:43.6px;width:36px;height:1.6px;background:#d8d8d8;opacity:.62"></div><div class="abs" style="left:208.5px;top:47px;width:30px;height:1.6px;background:#d8d8d8;opacity:.52"></div><div class="abs" style="left:208.5px;top:50.4px;width:14px;height:1.6px;background:#d8d8d8;opacity:.35"></div><div class="abs" style="left:208.5px;top:54.1px;width:11.5px;height:1.3px;background:#888;opacity:.6"></div><div class="abs" style="left:176px;top:66px;width:30px;height:15.8px;background:linear-gradient(90deg,#e8c8d0,#f4e8e8 40%,#d8b8a0 70%,#e8e0e8)"></div><div class="abs" style="left:208.5px;top:67px;width:34px;height:1.6px;background:#d8d8d8;opacity:.62"></div><div class="abs" style="left:208.5px;top:70.4px;width:22px;height:1.6px;background:#d8d8d8;opacity:.52"></div><div class="abs" style="left:208.5px;top:73.8px;width:12px;height:1.6px;background:#d8d8d8;opacity:.35"></div><div class="abs" style="left:208.5px;top:77.5px;width:11.5px;height:1.3px;background:#888;opacity:.6"></div><div class="abs" style="left:176px;top:84px;width:30px;height:16.5px;background:linear-gradient(90deg,#8a6a5a,#c8a890 40%,#a8a0a0 70%,#c8c0c0)"></div><div class="abs" style="left:208.5px;top:85px;width:36px;height:1.6px;background:#d8d8d8;opacity:.62"></div><div class="abs" style="left:208.5px;top:88.4px;width:30px;height:1.6px;background:#d8d8d8;opacity:.52"></div><div class="abs" style="left:208.5px;top:91.8px;width:14px;height:1.6px;background:#d8d8d8;opacity:.35"></div><div class="abs" style="left:208.5px;top:95.5px;width:11.5px;height:1.3px;background:#888;opacity:.6"></div><div class="abs" style="left:176px;top:101.8px;width:30px;height:16.7px;background:linear-gradient(90deg,#1a2a9a,#5a3ac8 40%,#d8d8f8 55%,#2a2ab0 70%,#1a1a7a)"></div><div class="abs" style="left:208.5px;top:102.8px;width:34px;height:1.6px;background:#d8d8d8;opacity:.62"></div><div class="abs" style="left:208.5px;top:106.2px;width:22px;height:1.6px;background:#d8d8d8;opacity:.52"></div><div class="abs" style="left:208.5px;top:109.6px;width:12px;height:1.6px;background:#d8d8d8;opacity:.35"></div><div class="abs" style="left:208.5px;top:113.3px;width:11.5px;height:1.3px;background:#888;opacity:.6"></div><div class="abs" style="left:176px;top:120px;width:30px;height:16px;background:linear-gradient(90deg,#3a4a9a,#c07830 45%,#e09a40 70%,#6a4a3a)"></div><div class="abs" style="left:208.5px;top:121px;width:36px;height:1.6px;background:#d8d8d8;opacity:.62"></div><div class="abs" style="left:208.5px;top:124.4px;width:30px;height:1.6px;background:#d8d8d8;opacity:.52"></div><div class="abs" style="left:208.5px;top:127.8px;width:14px;height:1.6px;background:#d8d8d8;opacity:.35"></div><div class="abs" style="left:208.5px;top:131.5px;width:11.5px;height:1.3px;background:#888;opacity:.6"></div><div class="abs" style="left:176px;top:139px;width:30px;height:16px;background:linear-gradient(90deg,#e8c8b0,#f4ece0 40%,#f8f0f0 60%,#e8d0c0)"></div><div class="abs" style="left:208.5px;top:140px;width:34px;height:1.6px;background:#d8d8d8;opacity:.62"></div><div class="abs" style="left:208.5px;top:143.4px;width:22px;height:1.6px;background:#d8d8d8;opacity:.52"></div><div class="abs" style="left:208.5px;top:150.5px;width:11.5px;height:1.3px;background:#888;opacity:.6"></div><div class="abs" style="left:176px;top:156.8px;width:30px;height:13.2px;background:linear-gradient(90deg,#1a2ab0,#3a5ae0 40%,#c8d8f8 60%,#2a3ac0)"></div><div class="abs" style="left:208.5px;top:157.8px;width:36px;height:1.6px;background:#d8d8d8;opacity:.62"></div><div class="abs" style="left:208.5px;top:161.2px;width:30px;height:1.6px;background:#d8d8d8;opacity:.52"></div><div class="abs" style="left:208.5px;top:164.6px;width:14px;height:1.6px;background:#d8d8d8;opacity:.35"></div><div class="abs" style="left:208.5px;top:168.3px;width:11.5px;height:1.3px;background:#888;opacity:.6"></div><div class="abs" style="left:176px;top:58.2px;width:30px;height:1px;background:#19e6f0"></div><div class="abs" style="left:176px;top:99.5px;width:30px;height:1px;background:#19e6f0"></div><div class="abs" style="left:206.3px;top:42px;width:1px;height:94.5px;background:repeating-linear-gradient(#19e6f0 0 1px,transparent 1px 2px)"></div><div class="abs" style="left:207px;top:42px;width:37px;height:1px;background:repeating-linear-gradient(90deg,#19e6f0 0 1px,transparent 1px 2px)"></div><div class="abs" style="left:207px;top:135.7px;width:37px;height:1px;background:repeating-linear-gradient(90deg,#19e6f0 0 1px,transparent 1px 2px)"></div><div class="abs" style="left:207px;top:62.3px;width:41px;height:0.5px;background:#333"></div><div class="abs" style="left:252.5px;top:22px;width:3.5px;height:148px;background:#dcdcdc"></div><div class="abs" style="left:253px;top:29px;width:2.6px;height:48px;background:#a8a8a8"></div></div>
<div class="lbl" style="left:211px;top:367px">ShareX_ScreenShot_98057008-07d9-4bad-9915-1d93...</div>
<div class="sh" style="left:476px;top:212px;width:258px;height:150px;"></div><div class="th" style="left:476px;top:212px;width:258px;height:150px;background:#1e1e1e;border-color:#cfcfcf;"><div class="abs" style="left:0px;top:0px;width:256px;height:10.5px;background:#131313"></div><div class="abs" style="left:86px;top:7.7px;width:38px;height:1.6px;background:#aaa;opacity:.6"></div><div class="abs" style="left:124px;top:7.5px;width:16px;height:1.9px;background:#3fc890;opacity:.85"></div><div class="abs" style="left:140.5px;top:7.7px;width:27.5px;height:1.6px;background:#aaa;opacity:.6"></div><div class="abs" style="left:127px;top:1.8px;width:2.3px;height:2.5px;background:#f07818;border-radius:1px"></div><svg class="abs" style="left:79px;top:122px" width="4" height="5" viewBox="0 0 4 5"><path d="M.5 .3v3.6l1-.8.7 1.5.6-.3-.7-1.4h1.2z" fill="#e8e8e8"/></svg></div>
<div class="lbl" style="left:477px;top:367px">ShareX_ScreenShot_402c4ce0-d8b6-4e48-b912-faedf5...</div>
<div class="sh" style="left:783px;top:188px;width:175px;height:174px;"></div><div class="th" style="left:783px;top:188px;width:175px;height:174px;background:#fff;border-color:#d2d2d2;"><div class="abs" style="left:0px;top:0px;width:173px;height:19.6px;background:#444"></div><div class="abs" style="left:73px;top:6px;white-space:nowrap;font-family:'Liberation Sans',sans-serif;font-size:7.2px;line-height:9px;color:#f4f4f4">Settings</div><div class="abs" style="left:0px;top:28.6px;width:173px;height:0.5px;background:#e4e4e4"></div><div class="abs" style="left:6.7px;top:35px;white-space:nowrap;font-family:'Liberation Sans',sans-serif;font-size:6.9px;line-height:9px;color:#3c4858">Enable cross-origin resource sharing</div><div class="abs" style="left:143px;top:33px;width:23.5px;height:13.3px;background:#4285f4;border-radius:6.7px"></div><div class="abs" style="left:153.5px;top:34.3px;width:11.8px;height:10.7px;background:#fff;border-radius:6px"></div><div class="abs" style="left:0px;top:51px;width:173px;height:15px;background:#f5f5f5"></div><div class="abs" style="left:6.7px;top:54.2px;white-space:nowrap;font-family:'Liberation Sans',sans-serif;font-size:6.9px;line-height:9px;color:#1c2430;font-weight:bold">Access-Control-Expose-Headers</div><div class="abs" style="left:6.7px;top:73px;white-space:nowrap;font-family:'Liberation Sans',sans-serif;font-size:6.9px;line-height:9px;color:#b4b4b4">comma-separated list of headers ...</div><div class="abs" style="left:0px;top:89.5px;width:173px;height:15.5px;background:#f5f5f5"></div><div class="abs" style="left:6.7px;top:93px;white-space:nowrap;font-family:'Liberation Sans',sans-serif;font-size:6.9px;line-height:9px;color:#15181c;font-weight:bold">Intercepted URLs or URL patterns</div><div class="abs" style="left:120px;top:95px;width:6px;height:3.3px;background:#3a50d8;border-radius:1px"></div><div class="abs" style="left:121px;top:96.3px;width:4px;height:0.6px;background:#fff"></div><div class="abs" style="left:0px;top:104.8px;width:173px;height:0.5px;background:#e8e8e8"></div><div class="abs" style="left:4.3px;top:110px;width:141.7px;height:12.5px;background:#ececec;border-radius:2px"></div><div class="abs" style="left:9.5px;top:112px;white-space:nowrap;font-family:'Liberation Sans',sans-serif;font-size:6.2px;line-height:9px;color:#b0b0b0">URL or URL pattern</div><div class="abs" style="left:152.7px;top:109.2px;width:13px;height:13px;background:#303030;border-radius:6.5px"></div><div class="abs" style="left:155.3px;top:115.2px;width:7.8px;height:1.1px;background:#fff"></div><div class="abs" style="left:158.7px;top:111.8px;width:1.1px;height:7.9px;background:#fff"></div><div class="abs" style="left:0px;top:127.8px;width:173px;height:0.5px;background:#ececec"></div><div class="abs" style="left:6.7px;top:133.5px;white-space:nowrap;font-family:'Liberation Sans',sans-serif;font-size:6.6px;line-height:9px;color:#666">*://*/*</div><svg class="abs" style="left:155.5px;top:133px" width="9" height="12" viewBox="0 0 9 12"><path d="M.6 2.2h7.8M3 2V.9h3V2M1.5 2.5l.5 8.6h5l.5-8.6M3.3 3.6v6.2M4.5 3.6v6.2M5.7 3.6v6.2" fill="none" stroke="#808080" stroke-width=".8"/></svg></div>
<div class="lbl" style="left:743px;top:367px">ShareX_ScreenShot_dcf6e799-466a-49a7-bf84-40b17...</div>
<div class="sh" style="left:1008px;top:272px;width:258px;height:90px;"></div><div class="th" style="left:1008px;top:272px;width:258px;height:90px;background:#002b36;border-color:#d0d0d0;"><div class="abs" style="left:2.1px;top:3.7px;white-space:nowrap;font-family:'DejaVu Sans Mono','Liberation Mono',monospace;font-size:8.9px;line-height:10.5px;letter-spacing:-.09px;color:#e4e2d2"><span style="color:#59b436">yuis ASUS</span> <span style="color:#2a8cd6">/mnt/c/pg</span>$ calc 2/3</div><div class="abs" style="left:2.1px;top:14.2px;white-space:nowrap;font-family:'DejaVu Sans Mono','Liberation Mono',monospace;font-size:8.9px;line-height:10.5px;letter-spacing:-.09px;color:#e4e2d2">0</div><div class="abs" style="left:2.1px;top:24.7px;white-space:nowrap;font-family:'DejaVu Sans Mono','Liberation Mono',monospace;font-size:8.9px;line-height:10.5px;letter-spacing:-.09px;color:#e4e2d2"><span style="color:#59b436">yuis ASUS</span> <span style="color:#2a8cd6">/mnt/c/pg</span>$ calc3 2/3</div><div class="abs" style="left:2.1px;top:35.2px;white-space:nowrap;font-family:'DejaVu Sans Mono','Liberation Mono',monospace;font-size:8.9px;line-height:10.5px;letter-spacing:-.09px;color:#e4e2d2">0.6666666666666666</div><div class="abs" style="left:2.1px;top:45.7px;white-space:nowrap;font-family:'DejaVu Sans Mono','Liberation Mono',monospace;font-size:8.9px;line-height:10.5px;letter-spacing:-.09px;color:#e4e2d2"><span style="color:#59b436">yuis ASUS</span> <span style="color:#2a8cd6">/mnt/c/pg</span>$ calc 2**10</div><div class="abs" style="left:2.1px;top:56.2px;white-space:nowrap;font-family:'DejaVu Sans Mono','Liberation Mono',monospace;font-size:8.9px;line-height:10.5px;letter-spacing:-.09px;color:#e4e2d2">20190324142810</div><div class="abs" style="left:2.1px;top:66.7px;white-space:nowrap;font-family:'DejaVu Sans Mono','Liberation Mono',monospace;font-size:8.9px;line-height:10.5px;letter-spacing:-.09px;color:#e4e2d2"><span style="color:#59b436">yuis ASUS</span> <span style="color:#2a8cd6">/mnt/c/pg</span>$ calc3 2**10</div><div class="abs" style="left:2.1px;top:77.2px;white-space:nowrap;font-family:'DejaVu Sans Mono','Liberation Mono',monospace;font-size:8.9px;line-height:10.5px;letter-spacing:-.09px;color:#e4e2d2">20190324142810</div><svg class="abs" style="left:193px;top:84px" width="4" height="5" viewBox="0 0 4 5"><path d="M.5 .3v3.6l1-.8.7 1.5.6-.3-.7-1.4h1.2z" fill="#e8e8e8"/></svg></div>
<div class="lbl" style="left:1009px;top:367px">ShareX_ScreenShot_9c0bab52-f0e5-4cd2-9d94-65647...</div>
<div class="sh" style="left:234px;top:537px;width:210px;height:23px;"></div><div class="th" style="left:234px;top:537px;width:210px;height:23px;background:#002b36;border-color:#e4e4e4;"><div class="abs" style="left:-4.7px;top:-7.3px;white-space:nowrap;font-family:'DejaVu Sans Mono','Liberation Mono',monospace;font-size:12.8px;line-height:15.4px;letter-spacing:.3px;color:#e6e4d4"><span style="color:#4db42e">yuis ASUS</span> <span style="color:#2a8cd6">/mnt/c/pg</span>$ var=abc</div><div class="abs" style="left:-4.7px;top:9px;white-space:nowrap;font-family:'DejaVu Sans Mono','Liberation Mono',monospace;font-size:12.8px;line-height:15.4px;letter-spacing:.3px;color:#e6e4d4"><span style="color:#4db42e">yuis ASUS</span> <span style="color:#2a8cd6">/mnt/c/pg</span>$ pythonprint "\"${var}\".upper()"</div></div>
<div class="lbl" style="left:211px;top:565px">ShareX_ScreenShot_54d89b4b-2072-46c2-b417-b2cfb...</div>
<div class="sh" style="left:476px;top:516px;width:258px;height:44px;"></div><div class="th" style="left:476px;top:516px;width:258px;height:44px;background:#002b36;border-color:#dcdcdc;"><div class="abs" style="left:-1.5px;top:-6.2px;white-space:nowrap;font-family:'DejaVu Sans Mono','Liberation Mono',monospace;font-size:7.4px;line-height:9px;letter-spacing:.15px;color:#e6e4d4"><span style="color:#3fa030">yuis ASUS</span> <span style="color:#2a80c8">/mnt/c/pg</span>$ </div><div class="abs" style="left:-1.5px;top:2.8px;white-space:nowrap;font-family:'DejaVu Sans Mono','Liberation Mono',monospace;font-size:7.4px;line-height:9px;letter-spacing:.15px;color:#e6e4d4"><span style="color:#3fa030">yuis ASUS</span> <span style="color:#2a80c8">/mnt/c/pg</span>$ var=abc</div><div class="abs" style="left:-1.5px;top:11.8px;white-space:nowrap;font-family:'DejaVu Sans Mono','Liberation Mono',monospace;font-size:7.4px;line-height:9px;letter-spacing:.15px;color:#e6e4d4"><span style="color:#3fa030">yuis ASUS</span> <span style="color:#2a80c8">/mnt/c/pg</span>$ pythonprint "\"${var}\".upper()"</div><div class="abs" style="left:-1.5px;top:20.8px;white-space:nowrap;font-family:'DejaVu Sans Mono','Liberation Mono',monospace;font-size:7.4px;line-height:9px;letter-spacing:.15px;color:#e6e4d4">ABC</div><div class="abs" style="left:-1.5px;top:29.8px;white-space:nowrap;font-family:'DejaVu Sans Mono','Liberation Mono',monospace;font-size:7.4px;line-height:9px;letter-spacing:.15px;color:#e6e4d4"><span style="color:#3fa030">yuis ASUS</span> <span style="color:#2a80c8">/mnt/c/pg</span>$ </div><div class="abs" style="left:95.3px;top:30.5px;width:0.9px;height:9px;background:#e0e0d0"></div></div>
<div class="lbl" style="left:477px;top:565px">ShareX_ScreenShot_dfff39f8-4344-4860-b005-329a4a...</div>
<div class="sh" style="left:755px;top:387px;width:231px;height:173px;"></div><div class="th" style="left:755px;top:387px;width:231px;height:173px;background:#222222;border-color:#e0e0e0;"><div class="abs" style="left:0px;top:0px;width:229px;height:5.8px;background:linear-gradient(90deg,#1b1b1b 60%,#1a2836 75%,#1c1c1c 92%)"></div><div class="abs" style="left:2.5px;top:2.3px;width:17.5px;height:1.4px;background:#999;opacity:.7"></div><div class="abs" style="left:206.5px;top:2.5px;width:1.6px;height:1.1px;background:#999"></div><div class="abs" style="left:215px;top:2.5px;width:1.6px;height:1.1px;background:#999"></div><div class="abs" style="left:223.5px;top:2.5px;width:1.6px;height:1.1px;background:#999"></div><div class="abs" style="left:0.3px;top:5.8px;width:27.5px;height:9.2px;background:#0a78d7"></div><div class="abs" style="left:2.5px;top:8px;width:3px;height:5px;background:#cfe4f8"></div><div class="abs" style="left:7.5px;top:9.6px;width:17.5px;height:1.8px;background:#e8f2fc;opacity:.9"></div><div class="abs" style="left:30px;top:8.5px;width:3.5px;height:4.3px;background:#ddd"></div><div class="abs" style="left:35.5px;top:9.7px;width:11.5px;height:1.6px;background:#ddd;opacity:.85"></div><div class="abs" style="left:95px;top:8.3px;width:3.6px;height:4.5px;background:#e4e4e4;opacity:.9"></div><div class="abs" style="left:106px;top:8.3px;width:3.6px;height:4.5px;background:#e4e4e4;opacity:.9"></div><div class="abs" style="left:118px;top:8.3px;width:3.6px;height:4.5px;background:#e4e4e4;opacity:.9"></div><div class="abs" style="left:130px;top:8.3px;width:3.6px;height:4.5px;background:#e4e4e4;opacity:.9"></div><div class="abs" style="left:174px;top:8.6px;width:4px;height:4px;background:#e4e4e4;opacity:.9"></div><div class="abs" style="left:180px;top:9.8px;width:10.5px;height:1.5px;background:#ddd;opacity:.85"></div><div class="abs" style="left:198px;top:8.6px;width:3.5px;height:4px;background:#e4e4e4;opacity:.9"></div><div class="abs" style="left:203.5px;top:9.8px;width:4.5px;height:1.5px;background:#ddd;opacity:.85"></div><div class="abs" style="left:213px;top:8px;width:3.5px;height:5px;background:#e4e4e4;opacity:.9"></div><div class="abs" style="left:223px;top:10.3px;width:3px;height:0.8px;background:#ccc"></div><div class="abs" style="left:187px;top:3px;width:1.6px;height:2.6px;background:#eee"></div><div class="abs" style="left:76px;top:67.8px;width:77px;height:44.8px;overflow:hidden"><svg class="abs" style="left:0;top:0" width="77" height="44.8" viewBox="0 0 172 97" preserveAspectRatio="none"><rect width="172" height="97" fill="#f0b9c0"/><ellipse cx="27" cy="21" rx="12" ry="15" fill="#f6d4d8"/><ellipse cx="42" cy="24" rx="9" ry="10" fill="#f6d4d8"/><ellipse cx="5" cy="15" rx="5" ry="6" fill="#f6d4d8"/><ellipse cx="13" cy="45" rx="6" ry="7" fill="#f6d4d8"/><ellipse cx="32" cy="45" rx="5" ry="7" fill="#f6d4d8"/><ellipse cx="33" cy="80" rx="10" ry="13" fill="#f6d4d8"/><ellipse cx="12" cy="93" rx="8" ry="7" fill="#f6d4d8"/><ellipse cx="46" cy="70" rx="5" ry="6" fill="#f6d4d8"/><ellipse cx="165" cy="47" rx="5" ry="7" fill="#f6d4d8"/><ellipse cx="160" cy="78" rx="11" ry="11" fill="#f6d4d8"/><ellipse cx="152" cy="62" rx="5" ry="6" fill="#f6d4d8"/><ellipse cx="106" cy="14" rx="6" ry="6" fill="#f6d4d8"/><ellipse cx="21" cy="6" rx="8" ry="5" fill="#f6d4d8"/><ellipse cx="168" cy="90" rx="6" ry="8" fill="#f6d4d8"/><defs><radialGradient id="cg77" cx=".5" cy=".45" r=".6"><stop offset="0" stop-color="#4a4a50"/><stop offset=".6" stop-color="#38383c"/><stop offset="1" stop-color="#2c2c30"/></radialGradient></defs><path d="M67.5 4 L84 22 L95 12 L100 20 L105 17 L112 21 L128.5 .8 L142 30 L149 50 L155 66 L150 74 L147 82 L141 92 L139 97 L88 97 L84 92 L66 85 L58 77 L61 66 L60 56 L63 36 Z" fill="url(#cg77)"/><path d="M69.5 11 L80 24 L68 33 Z" fill="#e8a8b0"/><path d="M127 7 L135 27 L119 22 Z" fill="#e8a8b0"/><path d="M76.5 52 Q85 47 95 51 Q96 61 90 66 Q82 69 77.5 62 Z" fill="#1fa347"/><path d="M117.5 47 Q127 41 136 46 Q137 55 131 60.5 Q123 63 118.5 57 Z" fill="#1fa347"/><path d="M76 52.5 Q85 46.5 95.5 51.5 L95 49 Q85 44 76 50Z" fill="#222"/><path d="M117 47.5 Q127 40.5 136.5 46.5 L136 44 Q127 38 117 45Z" fill="#222"/><ellipse cx="86.5" cy="56" rx="2" ry="5" fill="#1a2a1e"/><ellipse cx="127.5" cy="50.5" rx="2" ry="5" fill="#1a2a1e"/><circle cx="87.5" cy="58" r="1.3" fill="#fff"/><circle cx="129" cy="52" r="1.3" fill="#fff"/><path d="M105.5 61.5 h5 l-2.5 3z" fill="#e89aa8"/><path d="M108 64.5v3" stroke="#222" stroke-width=".7"/><path d="M97 26l6 4M99 24l2 7" stroke="#1c1c1e" stroke-width="1"/><path d="M86 90 Q112 97 139 84 L140 90 Q114 103 88 96 Z" fill="#a8262c"/><rect x="110.5" y="92.5" width="4" height="4.5" fill="#d8b040"/><path d="M154 65 L171 59 M154 68 L172 68 M152 72 L168 77 M62 74 L45 76 M63 78 L48 84 M64 70 L50 68" stroke="#fff" stroke-width=".5" opacity=".85" fill="none"/></svg></div><svg class="abs" style="left:219px;top:162.5px" width="6" height="6" viewBox="0 0 6 6"><path d="M.8 5.2L5.2 .8M3 .8h2.2v2.2M.8 3v2.2h2.2" stroke="#ddd" stroke-width=".8" fill="none"/></svg></div>
<div class="lbl" style="left:743px;top:565px">ShareX_ScreenShot_70473423-a50c-441e-8b4c-e8035...</div>
<div class="sh" style="left:1008px;top:394px;width:258px;height:166px;"></div><div class="th" style="left:1008px;top:394px;width:258px;height:166px;background:#000;border-color:#d8d8d8;"><div class="abs" style="left:0px;top:0.2px;width:9px;height:2.4px;background:#2fa030;opacity:.9"></div><div class="abs" style="left:11px;top:0.2px;width:21px;height:2.4px;background:#2060d0;opacity:.9"></div><div class="abs" style="left:34px;top:0.5px;width:81px;height:1.8px;background:#aaa;opacity:.7"></div><div class="abs" style="left:0px;top:3px;width:172px;height:97px;overflow:hidden"><svg class="abs" style="left:0;top:0" width="172" height="97" viewBox="0 0 172 97" preserveAspectRatio="none"><rect width="172" height="97" fill="#f0b9c0"/><ellipse cx="27" cy="21" rx="12" ry="15" fill="#f6d4d8"/><ellipse cx="42" cy="24" rx="9" ry="10" fill="#f6d4d8"/><ellipse cx="5" cy="15" rx="5" ry="6" fill="#f6d4d8"/><ellipse cx="13" cy="45" rx="6" ry="7" fill="#f6d4d8"/><ellipse cx="32" cy="45" rx="5" ry="7" fill="#f6d4d8"/><ellipse cx="33" cy="80" rx="10" ry="13" fill="#f6d4d8"/><ellipse cx="12" cy="93" rx="8" ry="7" fill="#f6d4d8"/><ellipse cx="46" cy="70" rx="5" ry="6" fill="#f6d4d8"/><ellipse cx="165" cy="47" rx="5" ry="7" fill="#f6d4d8"/><ellipse cx="160" cy="78" rx="11" ry="11" fill="#f6d4d8"/><ellipse cx="152" cy="62" rx="5" ry="6" fill="#f6d4d8"/><ellipse cx="106" cy="14" rx="6" ry="6" fill="#f6d4d8"/><ellipse cx="21" cy="6" rx="8" ry="5" fill="#f6d4d8"/><ellipse cx="168" cy="90" rx="6" ry="8" fill="#f6d4d8"/><defs><radialGradient id="cg172" cx=".5" cy=".45" r=".6"><stop offset="0" stop-color="#4a4a50"/><stop offset=".6" stop-color="#38383c"/><stop offset="1" stop-color="#2c2c30"/></radialGradient></defs><path d="M67.5 4 L84 22 L95 12 L100 20 L105 17 L112 21 L128.5 .8 L142 30 L149 50 L155 66 L150 74 L147 82 L141 92 L139 97 L88 97 L84 92 L66 85 L58 77 L61 66 L60 56 L63 36 Z" fill="url(#cg172)"/><path d="M69.5 11 L80 24 L68 33 Z" fill="#e8a8b0"/><path d="M127 7 L135 27 L119 22 Z" fill="#e8a8b0"/><path d="M76.5 52 Q85 47 95 51 Q96 61 90 66 Q82 69 77.5 62 Z" fill="#1fa347"/><path d="M117.5 47 Q127 41 136 46 Q137 55 131 60.5 Q123 63 118.5 57 Z" fill="#1fa347"/><path d="M76 52.5 Q85 46.5 95.5 51.5 L95 49 Q85 44 76 50Z" fill="#222"/><path d="M117 47.5 Q127 40.5 136.5 46.5 L136 44 Q127 38 117 45Z" fill="#222"/><ellipse cx="86.5" cy="56" rx="2" ry="5" fill="#1a2a1e"/><ellipse cx="127.5" cy="50.5" rx="2" ry="5" fill="#1a2a1e"/><circle cx="87.5" cy="58" r="1.3" fill="#fff"/><circle cx="129" cy="52" r="1.3" fill="#fff"/><path d="M105.5 61.5 h5 l-2.5 3z" fill="#e89aa8"/><path d="M108 64.5v3" stroke="#222" stroke-width=".7"/><path d="M97 26l6 4M99 24l2 7" stroke="#1c1c1e" stroke-width="1"/><path d="M86 90 Q112 97 139 84 L140 90 Q114 103 88 96 Z" fill="#a8262c"/><rect x="110.5" y="92.5" width="4" height="4.5" fill="#d8b040"/><path d="M154 65 L171 59 M154 68 L172 68 M152 72 L168 77 M62 74 L45 76 M63 78 L48 84 M64 70 L50 68" stroke="#fff" stroke-width=".5" opacity=".85" fill="none"/></svg></div><div class="abs" style="left:0px;top:100.6px;width:9px;height:2.2px;background:#2fa030;opacity:.9"></div><div class="abs" style="left:11px;top:100.6px;width:21px;height:2.2px;background:#2060d0;opacity:.9"></div><div class="abs" style="left:33px;top:101px;width:1.5px;height:1.6px;background:#ccc"></div><div class="abs" style="left:36px;top:101.5px;width:1.5px;height:1.5px;background:#ccc"></div><svg class="abs" style="left:235px;top:89px" width="4" height="5" viewBox="0 0 4 5"><path d="M.5 .3v3.6l1-.8.7 1.5.6-.3-.7-1.4h1.2z" fill="#e8e8e8"/></svg></div>
<div class="lbl" style="left:1009px;top:565px">ShareX_ScreenShot_377ff913-1558-4b53-9796-0f2a02...</div>
<div class="sh" style="left:210px;top:676px;width:258px;height:82px;"></div><div class="th" style="left:210px;top:676px;width:258px;height:82px;background:#002b36;border-color:#cfcfcf;"><div class="abs" style="left:0px;top:0px;white-space:nowrap;font-family:'DejaVu Sans Mono','Liberation Mono','Noto Sans CJK JP',monospace;font-size:4.3px;line-height:5px;color:#d8d8c8;letter-spacing:.27px">&lt;a href=&quot;nora-anime.net/&quot; target=&quot;_blank&quot; rel=&quot;nofollow&quot;&gt;TVアニメ「ノラと皇女と野良猫ハート」</div><div class="abs" style="left:0px;top:5px;white-space:nowrap;font-family:'DejaVu Sans Mono','Liberation Mono','Noto Sans CJK JP',monospace;font-size:4.3px;line-height:5px;color:#d8d8c8">公式サイト&lt;/a&gt;</div><div class="abs" style="left:0px;top:10px;white-space:nowrap;font-family:'DejaVu Sans Mono','Liberation Mono','Noto Sans CJK JP',monospace;font-size:4.3px;line-height:5px;color:#d8d8c8"><span style="color:#3fa030">yuis ASUS</span> <span style="color:#2a80c8">/mnt/c/pg</span>$ tiv /mnt/e/_images/_games/_hentai/ノラとと.jpg</div><svg class="abs" style="left:0.2px;top:15px" width="127.8" height="65" viewBox="0 0 127.8 65"><rect width="128" height="65" fill="#d2521a"/><rect x="0.00" y="0.00" width="9.18" height="5.05" fill="#dd5c34"/><rect x="9.13" y="0.00" width="13.74" height="5.05" fill="#e6383c"/><rect x="22.82" y="0.00" width="22.87" height="5.05" fill="#dd5c34"/><rect x="45.64" y="0.00" width="9.18" height="5.05" fill="#e6383c"/><rect x="54.77" y="0.00" width="32.00" height="5.05" fill="#dd5c34"/><rect x="86.72" y="0.00" width="4.61" height="5.05" fill="#e6383c"/><rect x="91.29" y="0.00" width="4.61" height="5.05" fill="#9aabab"/><rect x="95.85" y="0.00" width="4.61" height="5.05" fill="#dd5c34"/><rect x="100.41" y="0.00" width="4.61" height="5.05" fill="#e6383c"/><rect x="104.98" y="0.00" width="18.31" height="5.05" fill="#dd5c34"/><rect x="0.00" y="5.00" width="4.61" height="5.05" fill="#e6383c"/><rect x="9.13" y="5.00" width="4.61" height="5.05" fill="#e6383c"/><rect x="13.69" y="5.00" width="9.18" height="5.05" fill="#f1edda"/><rect x="22.82" y="5.00" width="4.61" height="5.05" fill="#d436a4"/><rect x="45.64" y="5.00" width="4.61" height="5.05" fill="#9aabab"/><rect x="50.21" y="5.00" width="4.61" height="5.05" fill="#dd5c34"/><rect x="54.77" y="5.00" width="9.18" height="5.05" fill="#e6383c"/><rect x="68.46" y="5.00" width="9.18" height="5.05" fill="#dd5c34"/><rect x="86.72" y="5.00" width="9.18" height="5.05" fill="#9aabab"/><rect x="95.85" y="5.00" width="4.61" height="5.05" fill="#d436a4"/><rect x="100.41" y="5.00" width="4.61" height="5.05" fill="#f1edda"/><rect x="104.98" y="5.00" width="4.61" height="5.05" fill="#dd5c34"/><rect x="0.00" y="10.00" width="4.61" height="5.05" fill="#d436a4"/><rect x="4.56" y="10.00" width="4.61" height="5.05" fill="#f1edda"/><rect x="9.13" y="10.00" width="4.61" height="5.05" fill="#e6383c"/><rect x="13.69" y="10.00" width="13.74" height="5.05" fill="#f1edda"/><rect x="27.39" y="10.00" width="4.61" height="5.05" fill="#dd5c34"/><rect x="31.95" y="10.00" width="4.61" height="5.05" fill="#e6383c"/><rect x="45.64" y="10.00" width="4.61" height="5.05" fill="#e6383c"/><rect x="50.21" y="10.00" width="4.61" height="5.05" fill="#9aabab"/><rect x="54.77" y="10.00" width="4.61" height="5.05" fill="#e6383c"/><rect x="59.34" y="10.00" width="4.61" height="5.05" fill="#dd5c34"/><rect x="63.90" y="10.00" width="4.61" height="5.05" fill="#e6383c"/><rect x="68.46" y="10.00" width="4.61" height="5.05" fill="#f1edda"/><rect x="73.03" y="10.00" width="4.61" height="5.05" fill="#9aabab"/><rect x="77.59" y="10.00" width="9.18" height="5.05" fill="#d9dbd2"/><rect x="91.29" y="10.00" width="4.61" height="5.05" fill="#9aabab"/><rect x="100.41" y="10.00" width="4.61" height="5.05" fill="#d9dbd2"/><rect x="104.98" y="10.00" width="4.61" height="5.05" fill="#e6383c"/><rect x="109.54" y="10.00" width="4.61" height="5.05" fill="#dd5c34"/><rect x="0.00" y="15.00" width="4.61" height="5.05" fill="#e6383c"/><rect x="4.56" y="15.00" width="4.61" height="5.05" fill="#dd5c34"/><rect x="9.13" y="15.00" width="4.61" height="5.05" fill="#e6383c"/><rect x="13.69" y="15.00" width="22.87" height="5.05" fill="#f1edda"/><rect x="36.51" y="15.00" width="4.61" height="5.05" fill="#dd5c34"/><rect x="45.64" y="15.00" width="4.61" height="5.05" fill="#e6383c"/><rect x="50.21" y="15.00" width="4.61" height="5.05" fill="#9aabab"/><rect x="54.77" y="15.00" width="4.61" height="5.05" fill="#dd5c34"/><rect x="59.34" y="15.00" width="4.61" height="5.05" fill="#9aabab"/><rect x="63.90" y="15.00" width="4.61" height="5.05" fill="#dd5c34"/><rect x="68.46" y="15.00" width="4.61" height="5.05" fill="#f1edda"/><rect x="73.03" y="15.00" width="22.87" height="5.05" fill="#002b36"/><rect x="95.85" y="15.00" width="4.61" height="5.05" fill="#dd5c34"/><rect x="100.41" y="15.00" width="4.61" height="5.05" fill="#9aabab"/><rect x="104.98" y="15.00" width="4.61" height="5.05" fill="#e6383c"/><rect x="0.00" y="20.00" width="9.18" height="5.05" fill="#e6383c"/><rect x="9.13" y="20.00" width="4.61" height="5.05" fill="#9aabab"/><rect x="13.69" y="20.00" width="9.18" height="5.05" fill="#f1edda"/><rect x="22.82" y="20.00" width="9.18" height="5.05" fill="#dd5c34"/><rect x="31.95" y="20.00" width="4.61" height="5.05" fill="#e6383c"/><rect x="45.64" y="20.00" width="4.61" height="5.05" fill="#e6383c"/><rect x="50.21" y="20.00" width="4.61" height="5.05" fill="#d436a4"/><rect x="54.77" y="20.00" width="50.26" height="5.05" fill="#002b36"/><rect x="104.98" y="20.00" width="4.61" height="5.05" fill="#9a7ac8"/><rect x="109.54" y="20.00" width="4.61" height="5.05" fill="#e6383c"/><rect x="0.00" y="25.00" width="4.61" height="5.05" fill="#f1edda"/><rect x="4.56" y="25.00" width="4.61" height="5.05" fill="#d436a4"/><rect x="9.13" y="25.00" width="9.18" height="5.05" fill="#e6383c"/><rect x="18.26" y="25.00" width="4.61" height="5.05" fill="#d436a4"/><rect x="22.82" y="25.00" width="13.74" height="5.05" fill="#dd5c34"/><rect x="45.64" y="25.00" width="4.61" height="5.05" fill="#e6383c"/><rect x="50.21" y="25.00" width="4.61" height="5.05" fill="#9aabab"/><rect x="54.77" y="25.00" width="54.82" height="5.05" fill="#002b36"/><rect x="109.54" y="25.00" width="4.61" height="5.05" fill="#dd5c34"/><rect x="123.24" y="25.00" width="4.61" height="5.05" fill="#e6383c"/><rect x="0.00" y="30.00" width="4.61" height="5.05" fill="#e6383c"/><rect x="9.13" y="30.00" width="4.61" height="5.05" fill="#d9dbd2"/><rect x="13.69" y="30.00" width="4.61" height="5.05" fill="#d436a4"/><rect x="18.26" y="30.00" width="4.61" height="5.05" fill="#e6383c"/><rect x="22.82" y="30.00" width="4.61" height="5.05" fill="#f1edda"/><rect x="27.39" y="30.00" width="4.61" height="5.05" fill="#e6383c"/><rect x="45.64" y="30.00" width="9.18" height="5.05" fill="#9aabab"/><rect x="54.77" y="30.00" width="9.18" height="5.05" fill="#002b36"/><rect x="63.90" y="30.00" width="4.61" height="5.05" fill="#9aabab"/><rect x="68.46" y="30.00" width="18.31" height="5.05" fill="#002b36"/><rect x="86.72" y="30.00" width="4.61" height="5.05" fill="#138d8d"/><rect x="91.29" y="30.00" width="4.61" height="5.05" fill="#2a7cc0"/><rect x="95.85" y="30.00" width="4.61" height="5.05" fill="#138d8d"/><rect x="100.41" y="30.00" width="9.18" height="5.05" fill="#002b36"/><rect x="109.54" y="30.00" width="9.18" height="5.05" fill="#e6383c"/><rect x="123.24" y="30.00" width="4.61" height="5.05" fill="#f1edda"/><rect x="0.00" y="35.00" width="9.18" height="5.05" fill="#dd5c34"/><rect x="9.13" y="35.00" width="4.61" height="5.05" fill="#f1edda"/><rect x="13.69" y="35.00" width="9.18" height="5.05" fill="#dd5c34"/><rect x="22.82" y="35.00" width="4.61" height="5.05" fill="#e6383c"/><rect x="27.39" y="35.00" width="4.61" height="5.05" fill="#dd5c34"/><rect x="41.08" y="35.00" width="4.61" height="5.05" fill="#e6383c"/><rect x="45.64" y="35.00" width="4.61" height="5.05" fill="#9aabab"/><rect x="50.21" y="35.00" width="4.61" height="5.05" fill="#002b36"/><rect x="54.77" y="35.00" width="4.61" height="5.05" fill="#9aabab"/><rect x="59.34" y="35.00" width="13.74" height="5.05" fill="#138d8d"/><rect x="73.03" y="35.00" width="13.74" height="5.05" fill="#9aabab"/><rect x="86.72" y="35.00" width="4.61" height="5.05" fill="#2fae3a"/><rect x="91.29" y="35.00" width="4.61" height="5.05" fill="#2a7cc0"/><rect x="95.85" y="35.00" width="4.61" height="5.05" fill="#2fae3a"/><rect x="100.41" y="35.00" width="4.61" height="5.05" fill="#002b36"/><rect x="104.98" y="35.00" width="4.61" height="5.05" fill="#9aabab"/><rect x="109.54" y="35.00" width="4.61" height="5.05" fill="#f1edda"/><rect x="114.11" y="35.00" width="4.61" height="5.05" fill="#e6383c"/><rect x="118.67" y="35.00" width="4.61" height="5.05" fill="#d436a4"/><rect x="123.24" y="35.00" width="4.61" height="5.05" fill="#e6383c"/><rect x="0.00" y="40.00" width="4.61" height="5.05" fill="#dd5c34"/><rect x="18.26" y="40.00" width="4.61" height="5.05" fill="#dd5c34"/><rect x="41.08" y="40.00" width="4.61" height="5.05" fill="#e6383c"/><rect x="45.64" y="40.00" width="4.61" height="5.05" fill="#002b36"/><rect x="50.21" y="40.00" width="9.18" height="5.05" fill="#9aabab"/><rect x="59.34" y="40.00" width="9.18" height="5.05" fill="#138d8d"/><rect x="68.46" y="40.00" width="18.31" height="5.05" fill="#9aabab"/><rect x="86.72" y="40.00" width="4.61" height="5.05" fill="#138d8d"/><rect x="91.29" y="40.00" width="4.61" height="5.05" fill="#2fae3a"/><rect x="95.85" y="40.00" width="4.61" height="5.05" fill="#138d8d"/><rect x="100.41" y="40.00" width="4.61" height="5.05" fill="#002b36"/><rect x="104.98" y="40.00" width="4.61" height="5.05" fill="#9aabab"/><rect x="109.54" y="40.00" width="4.61" height="5.05" fill="#e6383c"/><rect x="114.11" y="40.00" width="4.61" height="5.05" fill="#d436a4"/><rect x="118.67" y="40.00" width="4.61" height="5.05" fill="#e6383c"/><rect x="123.24" y="40.00" width="4.61" height="5.05" fill="#dd5c34"/><rect x="0.00" y="45.00" width="4.61" height="5.05" fill="#dd5c34"/><rect x="41.08" y="45.00" width="4.61" height="5.05" fill="#e6383c"/><rect x="45.64" y="45.00" width="4.61" height="5.05" fill="#9aabab"/><rect x="50.21" y="45.00" width="9.18" height="5.05" fill="#002b36"/><rect x="59.34" y="45.00" width="9.18" height="5.05" fill="#138d8d"/><rect x="68.46" y="45.00" width="4.61" height="5.05" fill="#9aabab"/><rect x="73.03" y="45.00" width="4.61" height="5.05" fill="#d9dbd2"/><rect x="77.59" y="45.00" width="9.18" height="5.05" fill="#002b36"/><rect x="86.72" y="45.00" width="9.18" height="5.05" fill="#138d8d"/><rect x="95.85" y="45.00" width="13.74" height="5.05" fill="#9aabab"/><rect x="109.54" y="45.00" width="4.61" height="5.05" fill="#e6383c"/><rect x="118.67" y="45.00" width="9.18" height="5.05" fill="#f1edda"/><rect x="0.00" y="50.00" width="4.61" height="5.05" fill="#dd5c34"/><rect x="22.82" y="50.00" width="4.61" height="5.05" fill="#d436a4"/><rect x="27.39" y="50.00" width="4.61" height="5.05" fill="#e6383c"/><rect x="31.95" y="50.00" width="9.18" height="5.05" fill="#dd5c34"/><rect x="41.08" y="50.00" width="4.61" height="5.05" fill="#e6383c"/><rect x="45.64" y="50.00" width="13.74" height="5.05" fill="#002b36"/><rect x="59.34" y="50.00" width="18.31" height="5.05" fill="#9aabab"/><rect x="77.59" y="50.00" width="4.61" height="5.05" fill="#002b36"/><rect x="82.16" y="50.00" width="18.31" height="5.05" fill="#9aabab"/><rect x="100.41" y="50.00" width="9.18" height="5.05" fill="#002b36"/><rect x="109.54" y="50.00" width="9.18" height="5.05" fill="#f1edda"/><rect x="118.67" y="50.00" width="4.61" height="5.05" fill="#d9dbd2"/><rect x="123.24" y="50.00" width="4.61" height="5.05" fill="#f1edda"/><rect x="0.00" y="55.00" width="4.61" height="5.05" fill="#dd5c34"/><rect x="13.69" y="55.00" width="4.61" height="5.05" fill="#e6383c"/><rect x="18.26" y="55.00" width="4.61" height="5.05" fill="#d436a4"/><rect x="22.82" y="55.00" width="4.61" height="5.05" fill="#f1edda"/><rect x="27.39" y="55.00" width="4.61" height="5.05" fill="#e6383c"/><rect x="31.95" y="55.00" width="9.18" height="5.05" fill="#dd5c34"/><rect x="41.08" y="55.00" width="13.74" height="5.05" fill="#9aabab"/><rect x="54.77" y="55.00" width="45.69" height="5.05" fill="#002b36"/><rect x="100.41" y="55.00" width="9.18" height="5.05" fill="#9aabab"/><rect x="109.54" y="55.00" width="9.18" height="5.05" fill="#f1edda"/><rect x="118.67" y="55.00" width="4.61" height="5.05" fill="#e6383c"/><rect x="123.24" y="55.00" width="4.61" height="5.05" fill="#dd5c34"/><rect x="0.00" y="60.00" width="4.61" height="5.05" fill="#dd5c34"/><rect x="13.69" y="60.00" width="4.61" height="5.05" fill="#e6383c"/><rect x="18.26" y="60.00" width="4.61" height="5.05" fill="#f1edda"/><rect x="22.82" y="60.00" width="4.61" height="5.05" fill="#d9dbd2"/><rect x="27.39" y="60.00" width="18.31" height="5.05" fill="#e6383c"/><rect x="45.64" y="60.00" width="9.18" height="5.05" fill="#dd5c34"/><rect x="54.77" y="60.00" width="4.61" height="5.05" fill="#002b36"/><rect x="59.34" y="60.00" width="4.61" height="5.05" fill="#9aabab"/><rect x="63.90" y="60.00" width="4.61" height="5.05" fill="#002b36"/><rect x="68.46" y="60.00" width="4.61" height="5.05" fill="#9aabab"/><rect x="73.03" y="60.00" width="4.61" height="5.05" fill="#002b36"/><rect x="77.59" y="60.00" width="4.61" height="5.05" fill="#9aabab"/><rect x="82.16" y="60.00" width="4.61" height="5.05" fill="#002b36"/><rect x="86.72" y="60.00" width="4.61" height="5.05" fill="#9aabab"/><rect x="91.29" y="60.00" width="4.61" height="5.05" fill="#002b36"/><rect x="95.85" y="60.00" width="4.61" height="5.05" fill="#dd5c34"/><rect x="104.98" y="60.00" width="4.61" height="5.05" fill="#e6383c"/><rect x="109.54" y="60.00" width="13.74" height="5.05" fill="#dd5c34"/><rect x="123.24" y="60.00" width="4.61" height="5.05" fill="#e6383c"/><rect x="46" y="20" width="62" height="45" fill="url(#px)" opacity=".35"/><defs><pattern id="px" width="4.56" height="5" patternUnits="userSpaceOnUse"><rect x="1" y="1" width="2.6" height="3" fill="#9aabab"/></pattern></defs></svg><svg class="abs" style="left:151px;top:48px" width="5" height="6" viewBox="0 0 4 5"><path d="M.5 .3v3.6l1-.8.7 1.5.6-.3-.7-1.4h1.2z" fill="#e8e8e8"/></svg></div>
<div class="lbl" style="left:211px;top:763px">ShareX_ScreenShot_842f6a73-7de7-43af-adad-0e30b...</div>
<div class="abs" style="left:1293px;top:103px;width:10px;height:676px;background:#f1f1f1;box-shadow:inset 1px 0 0 #e2e2e2"></div>
<div class="abs" style="left:1293px;top:103px;width:10px;height:9px;background:#fff;border-bottom:1px solid #d8d8d8;box-sizing:border-box"></div>
<div class="abs" style="left:1293px;top:748px;width:10px;height:22px;background:#fff;border-top:1px solid #c4c4c4;border-bottom:1px solid #c4c4c4;box-sizing:border-box"></div>
<div class="abs" style="left:1293px;top:770px;width:10px;height:9px;background:#fff"></div>
<svg class="abs" style="left:1293px;top:103px" width="10" height="9" viewBox="0 0 10 9"><path d="M1.3 6.8L5 3l3.7 3.8z" fill="#5f6468"/></svg>
<svg class="abs" style="left:1293px;top:770px" width="10" height="9" viewBox="0 0 10 9"><path d="M1.6 2.2L5 5.8l3.4-3.6z" fill="#5f6468"/></svg>

<div id="status" class="abs"></div>
<div class="abs" style="left:207px;top:780px;width:25px;height:17px;box-sizing:border-box;border:1px solid #c5c1bd;border-radius:3px;background:#fbfaf9"></div>
<div class="abs" style="left:234px;top:780px;width:56px;height:17px;box-sizing:border-box;border:1px solid #c5c1bd;border-radius:3px;background:#fbfaf9"></div>
<svg class="abs" style="left:213px;top:784px" width="14" height="9" viewBox="0 0 14 9"><rect x="1" y="1" width="2.4" height="7" fill="#111"/><path d="M5 4.5h7M5 4.5l2.5-2M5 4.5l2.5 2" stroke="#111" stroke-width="1" fill="none"/></svg>
<div class="t" style="left:240px;top:784px">Add Filter</div>
<div class="abs" style="left:289px;top:794px;width:1px;height:1px;background:#333"></div>
<div class="t" style="left:697px;top:784px">2377 documents</div>
<div class="abs" style="left:1200px;top:787px;width:76px;height:3px;border-radius:1.5px;background:#3d94d6;box-shadow:0 0 0 .5px #2a78b8 inset"></div>
<div class="abs" style="left:1273px;top:784px;width:9px;height:9px;box-sizing:border-box;border:1px solid #a5a29e;border-radius:3px;background:#fff"></div>
<!-- window borders -->
<div class="abs" style="left:1px;top:31px;width:1px;height:767px;background:#f8f5f1"></div><div class="abs" style="left:0;top:0;width:1px;height:799px;background:#686868"></div>
<div class="abs" style="left:1303px;top:0;width:1px;height:799px;background:#2c2c2c"></div>
<div class="abs" style="left:0;top:0;width:1304px;height:1px;background:linear-gradient(90deg,#5e5e5e,#4a4a4a 40%,#1c1c1c 80%)"></div>
<div class="abs" style="left:0;top:797px;width:1304px;height:1px;background:#fbf8f4"></div><div class="abs" style="left:0;top:798px;width:1304px;height:1px;background:#0a0a0a"></div>
<!-- cursor -->
<svg class="abs" style="left:904px;top:14px" width="18" height="24" viewBox="0 0 18 24"><path d="M2.5 2.5 L2.5 18.3 L6.4 15 L9.3 21 Q10.8 21.6 12 20.3 L9.5 14.2 L14 14 Z" fill="#fff" stroke="#16162a" stroke-width="1.1" stroke-linejoin="round"/></svg>
</body></html>
